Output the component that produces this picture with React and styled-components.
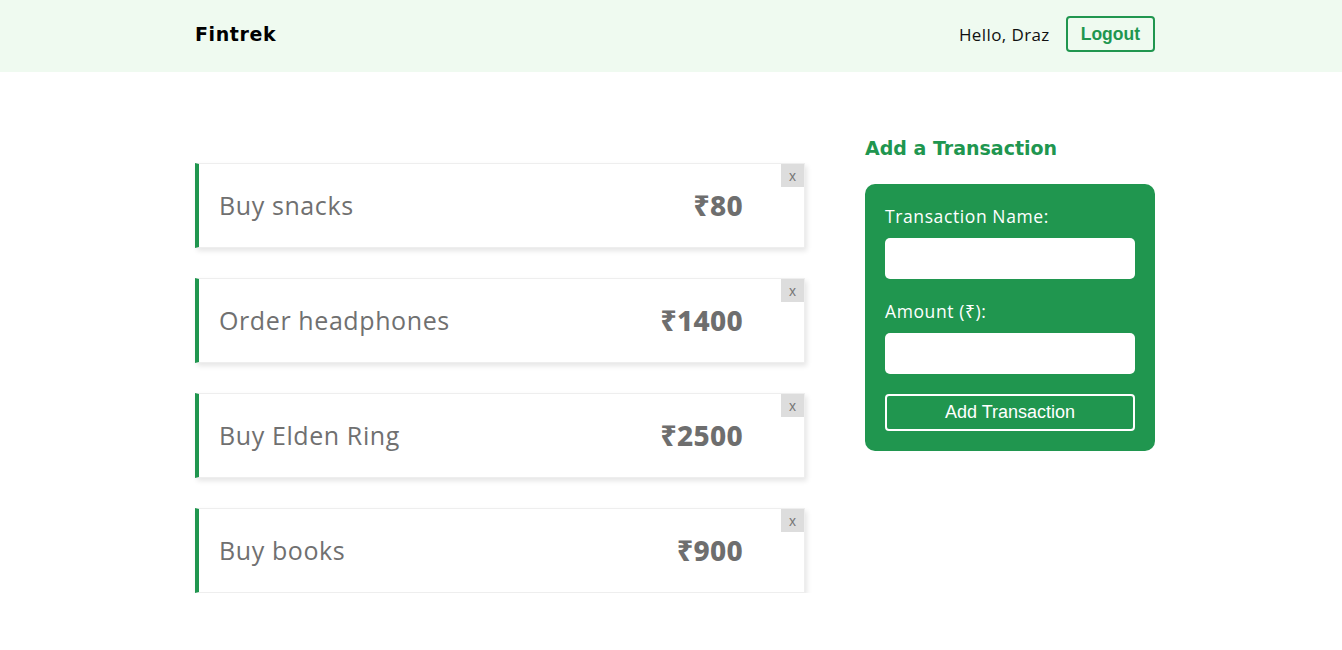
import React from 'react';
import styled, { createGlobalStyle } from 'styled-components';

const GlobalStyle = createGlobalStyle`
  * { box-sizing: border-box; }
  body {
    margin: 0;
    font-family: 'Open Sans', 'Noto Sans', sans-serif;
    background: #fff;
  }
`;

const green = '#20964f';

const Header = styled.header`
  height: 72px;
  padding: 0 0 4px 8px;
  background: #effaf0;
`;

const Container = styled.div`
  width: 960px;
  margin: 0 auto;
  height: 100%;
  display: flex;
  align-items: center;
  justify-content: space-between;
`;

const Logo = styled.div`
  font-family: 'DejaVu Sans', sans-serif;
  font-weight: 700;
  font-size: 19px;
  letter-spacing: 0.6px;
  color: #000;
`;

const UserBox = styled.div`
  display: flex;
  align-items: center;
  gap: 16px;
`;

const Hello = styled.span`
  font-size: 17px;
  letter-spacing: 0.4px;
  color: #111;
`;

const LogoutButton = styled.button`
  height: 36px;
  padding: 0 13px;
  background: transparent;
  border: 2px solid ${green};
  border-radius: 4px;
  color: ${green};
  font-family: 'Liberation Sans', Arial, sans-serif;
  font-weight: 700;
  font-size: 17.5px;
`;

const MainWrap = styled.div`
  padding-left: 8px;
`;

const Main = styled.main`
  width: 960px;
  margin: 0 auto;
  padding-top: 62px;
  display: flex;
  gap: 60px;
`;

const List = styled.div`
  width: 610px;
  padding-top: 29px;
  display: flex;
  flex-direction: column;
  gap: 30px;
`;

const Card = styled.div`
  position: relative;
  height: 85px;
  display: flex;
  align-items: center;
  justify-content: space-between;
  padding: 0 61px 2px 20px;
  background: #fff;
  border: 1px solid #eee;
  border-left: 4px solid ${green};
  box-shadow: 2px 3px 5px rgba(0, 0, 0, 0.1);
`;

const Name = styled.span`
  font-size: 25px;
  letter-spacing: 0.6px;
  color: #707070;
`;

const Amount = styled.span`
  font-family: 'Noto Sans', sans-serif;
  font-weight: 800;
  font-size: 28px;
  letter-spacing: 0.3px;
  color: #6e6e6e;
`;

const CloseButton = styled.button`
  position: absolute;
  top: 0;
  right: 0;
  width: 23px;
  height: 23px;
  padding: 0;
  border: none;
  background: #ddd;
  color: #777;
  font-family: 'Liberation Sans', Arial, sans-serif;
  font-size: 14px;
`;

const Side = styled.aside`
  width: 290px;
`;

const Title = styled.h3`
  margin: 0 0 22px;
  font-family: 'DejaVu Sans', sans-serif;
  font-weight: 700;
  font-size: 19px;
  line-height: 28px;
  color: ${green};
`;

const Form = styled.form`
  display: flex;
  flex-direction: column;
  padding: 20px;
  background: ${green};
  border-radius: 10px;
`;

const Label = styled.label`
  color: #fff;
  font-size: 17.5px;
  letter-spacing: 0.6px;
  line-height: 24px;
  margin-bottom: 10px;
`;

const Input = styled.input`
  height: 41px;
  margin-bottom: 20px;
  border: none;
  border-radius: 5px;
  background: #fff;
`;

const Submit = styled.button`
  height: 37px;
  background: transparent;
  border: 2px solid #fff;
  border-radius: 4px;
  color: #fff;
  font-family: 'Liberation Sans', Arial, sans-serif;
  font-size: 18px;
`;

const transactions = [
  { id: 1, name: 'Buy snacks', amount: 80 },
  { id: 2, name: 'Order headphones', amount: 1400 },
  { id: 3, name: 'Buy Elden Ring', amount: 2500 },
  { id: 4, name: 'Buy books', amount: 900 },
];

export default function App() {
  return (
    <>
      <GlobalStyle />
      <Header>
        <Container>
          <Logo>Fintrek</Logo>
          <UserBox>
            <Hello>Hello, Draz</Hello>
            <LogoutButton>Logout</LogoutButton>
          </UserBox>
        </Container>
      </Header>
      <MainWrap>
        <Main>
          <List>
            {transactions.map((t) => (
              <Card key={t.id}>
                <Name>{t.name}</Name>
                <Amount>₹{t.amount}</Amount>
                <CloseButton>x</CloseButton>
              </Card>
            ))}
          </List>
          <Side>
            <Title>Add a Transaction</Title>
            <Form onSubmit={(e) => e.preventDefault()}>
              <Label>Transaction Name:</Label>
              <Input type="text" />
              <Label>Amount (₹):</Label>
              <Input type="number" />
              <Submit type="submit">Add Transaction</Submit>
            </Form>
          </Side>
        </Main>
      </MainWrap>
    </>
  );
}
